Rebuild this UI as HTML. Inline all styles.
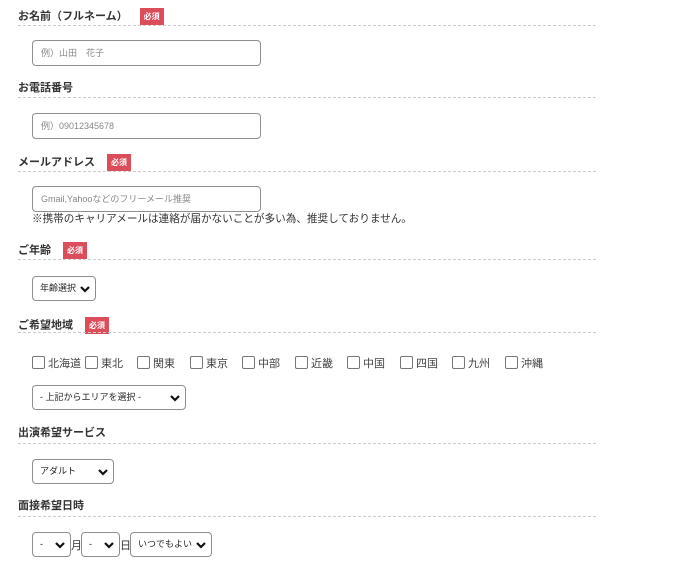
<!DOCTYPE html>
<html><head><meta charset="utf-8"><style>
body{margin:0;width:676px;height:566px;background:#fff;font-family:"Liberation Sans","Noto Sans CJK JP",sans-serif;color:#333;position:relative;overflow:hidden}
.a{position:absolute}
.lb{position:absolute;left:18px;font-size:11px;font-weight:bold;color:#333;line-height:14px}
.bd{display:inline-block;background:#dc4d5c;color:#fff;font-size:8px;font-weight:bold;padding:0 4px;height:17px;line-height:17px;vertical-align:middle;margin-left:12px}
.dl{position:absolute;left:18px;width:578px;border-top:1px dashed #ccc;height:0}
.in{position:absolute;left:32px;border:1px solid #8f8f8f;border-radius:4px;font-size:9px;color:#888;line-height:24px;padding-left:8px;box-sizing:border-box;width:229px;height:26px}
.sl{position:absolute;height:25px;border:1px solid #8f8f8f;border-radius:4px;box-sizing:border-box;font-size:9px;color:#222;line-height:23px;padding-left:7px}
.sl svg{position:absolute;right:5px;top:8px}
.cb{position:absolute;top:356px;width:11px;height:11px;border:1px solid #777;border-radius:2px}
.ct{position:absolute;top:355px;font-size:11px;color:#444}
</style></head><body>
<div class="lb" style="top:8px">お名前（フルネーム）<span class="bd">必須</span></div>
<div class="dl" style="top:25px"></div>
<div class="in" style="top:40px">例）山田　花子</div>

<div class="lb" style="top:81px">お電話番号</div>
<div class="dl" style="top:97px"></div>
<div class="in" style="top:113px">例）09012345678</div>

<div class="lb" style="top:154px">メールアドレス<span class="bd">必須</span></div>
<div class="dl" style="top:171px"></div>
<div class="in" style="top:186px">Gmail,Yahooなどのフリーメール推奨</div>
<div class="a" style="left:32px;top:211px;font-size:10.6px;color:#333">※携帯のキャリアメールは連絡が届かないことが多い為、推奨しておりません。</div>

<div class="lb" style="top:242px">ご年齢<span class="bd">必須</span></div>
<div class="dl" style="top:259px"></div>
<div class="sl" style="left:32px;top:276px;width:64px">年齢選択<svg width="10" height="8" viewBox="0 0 10 8"><path d="M1 2l4 4 4-4" stroke="#111" stroke-width="2.2" fill="none"/></svg></div>

<div class="lb" style="top:317px">ご希望地域<span class="bd">必須</span></div>
<div class="dl" style="top:332px"></div>
<div class="cb" style="left:32px"></div><div class="ct" style="left:48px">北海道</div>
<div class="cb" style="left:85px"></div><div class="ct" style="left:101px">東北</div>
<div class="cb" style="left:137px"></div><div class="ct" style="left:153px">関東</div>
<div class="cb" style="left:190px"></div><div class="ct" style="left:206px">東京</div>
<div class="cb" style="left:242px"></div><div class="ct" style="left:258px">中部</div>
<div class="cb" style="left:295px"></div><div class="ct" style="left:311px">近畿</div>
<div class="cb" style="left:347px"></div><div class="ct" style="left:363px">中国</div>
<div class="cb" style="left:400px"></div><div class="ct" style="left:416px">四国</div>
<div class="cb" style="left:452px"></div><div class="ct" style="left:468px">九州</div>
<div class="cb" style="left:505px"></div><div class="ct" style="left:521px">沖縄</div>
<div class="sl" style="left:32px;top:385px;width:154px">- 上記からエリアを選択 -<svg width="10" height="8" viewBox="0 0 10 8"><path d="M1 2l4 4 4-4" stroke="#111" stroke-width="2.2" fill="none"/></svg></div>

<div class="lb" style="top:426px">出演希望サービス</div>
<div class="dl" style="top:443px"></div>
<div class="sl" style="left:32px;top:459px;width:82px">アダルト<svg width="10" height="8" viewBox="0 0 10 8"><path d="M1 2l4 4 4-4" stroke="#111" stroke-width="2.2" fill="none"/></svg></div>

<div class="lb" style="top:499px">面接希望日時</div>
<div class="dl" style="top:516px"></div>
<div class="sl" style="left:32px;top:532px;width:39px">-<svg width="10" height="8" viewBox="0 0 10 8"><path d="M1 2l4 4 4-4" stroke="#111" stroke-width="2.2" fill="none"/></svg></div>
<div class="a" style="left:71px;top:537px;font-size:11px">月</div>
<div class="sl" style="left:81px;top:532px;width:39px">-<svg width="10" height="8" viewBox="0 0 10 8"><path d="M1 2l4 4 4-4" stroke="#111" stroke-width="2.2" fill="none"/></svg></div>
<div class="a" style="left:120px;top:537px;font-size:11px">日</div>
<div class="sl" style="left:130px;top:532px;width:82px">いつでもよい<svg width="10" height="8" viewBox="0 0 10 8"><path d="M1 2l4 4 4-4" stroke="#111" stroke-width="2.2" fill="none"/></svg></div>
</body></html>
